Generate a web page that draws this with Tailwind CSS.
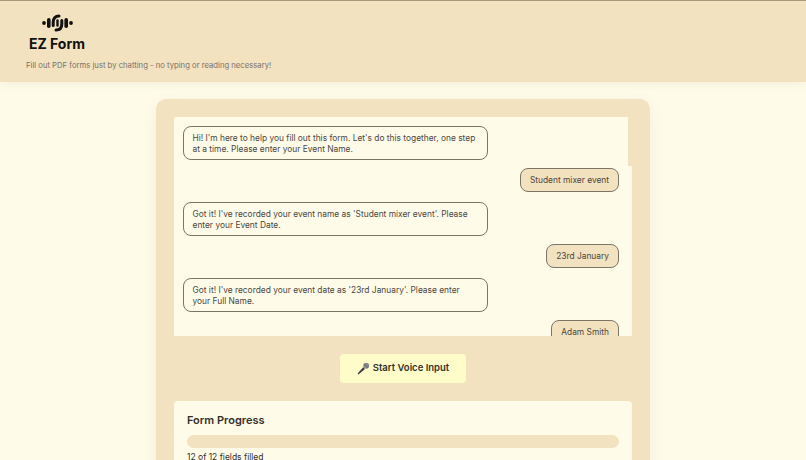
<!DOCTYPE html>
<html lang="en">
<head>
  <meta charset="UTF-8">
  <meta name="viewport" content="width=device-width, initial-scale=1.0">
  <title>EZ Form</title>
  <script src="https://cdn.jsdelivr.net/npm/@tailwindcss/browser@4"></script>
</head>
<body class="h-screen overflow-hidden bg-[#fffbe9] font-['Inter',sans-serif] text-[#4a4640]">
  <!-- Header -->
  <header class="h-[82px] bg-[#f3e2bf] border-t border-[#a8977a] shadow-[0_2px_10px_rgba(0,0,0,0.05)] pl-[26px]">
    <div class="w-[62px] flex flex-col items-center pt-[13px]">
      <svg width="31" height="18" viewBox="0 0 31 18" fill="#111">
        <circle cx="2" cy="9" r="1.9"/>
        <rect x="5" y="4" width="3.6" height="10" rx="1.8"/>
        <path d="M17 2C13.2 2 11.2 4.5 11.2 8V11.5" fill="none" stroke="#111" stroke-width="3" stroke-linecap="round"/>
        <path d="M14 16C17.8 16 19.8 13.5 19.8 10V6.5" fill="none" stroke="#111" stroke-width="3" stroke-linecap="round"/>
        <path d="M15.5 6.5V11.5" fill="none" stroke="#111" stroke-width="2.4" stroke-linecap="round"/>
        <rect x="22.4" y="4" width="3.6" height="10" rx="1.8"/>
        <circle cx="29" cy="9" r="1.9"/>
      </svg>
      <h1 class="mt-[2px] text-[14px] leading-[20px] font-bold text-[#111] whitespace-nowrap">EZ Form</h1>
    </div>
    <p class="mt-[6px] text-[7.7px] leading-[12px] text-[#78716c]">Fill out PDF forms just by chatting - no typing or reading necessary!</p>
  </header>

  <!-- Main card -->
  <main class="w-[494px] ml-[156px] mt-[17px] bg-[#f3e2bf] rounded-[10px] p-[18px] shadow-[0_4px_18px_rgba(0,0,0,0.05)]">
    <div class="relative h-[219px] overflow-hidden bg-[#fffbe9] rounded-t-[2px] pt-[9px] pl-[9px] pr-[13px] flex flex-col text-[8.4px] leading-[10.5px]">
      <div class="absolute top-0 right-0 w-[4px] h-[49px] bg-[#f3e2bf]"></div>
      <div class="w-[305px] h-[34px] shrink-0 border border-[#7a7566] rounded-[8px] px-[8.5px] py-[6px]">Hi! I'm here to help you fill out this form. Let's do this together, one step at a time. Please enter your Event Name.</div>
      <div class="self-end mt-[8px] h-[24px] shrink-0 bg-[#f3e2bf] border border-[#7a7566] rounded-[8px] px-[9px] flex items-center">Student mixer event</div>
      <div class="w-[305px] h-[34px] shrink-0 mt-[10px] border border-[#7a7566] rounded-[8px] px-[8.5px] py-[6px]">Got it! I've recorded your event name as 'Student mixer event'. Please enter your Event Date.</div>
      <div class="self-end mt-[8px] h-[24px] shrink-0 bg-[#f3e2bf] border border-[#7a7566] rounded-[8px] px-[9px] flex items-center">23rd January</div>
      <div class="w-[305px] h-[34px] shrink-0 mt-[10px] border border-[#7a7566] rounded-[8px] px-[8.5px] py-[6px]">Got it! I've recorded your event date as '23rd January'. Please enter your Full Name.</div>
      <div class="self-end mt-[8px] h-[24px] shrink-0 bg-[#f3e2bf] border border-[#7a7566] rounded-[8px] px-[9px] flex items-center">Adam Smith</div>
    </div>

    <div class="flex justify-center pt-[18px] pb-[18px]">
      <button class="h-[29px] w-[126px] bg-[#fefcc9] rounded-[4px] flex items-center justify-center gap-[3px] text-[9.5px] font-semibold text-[#33302b]">
        <svg width="13" height="13" viewBox="0 0 13 13">
          <path d="M1.4 12.4 L0.6 11.6 L6.2 5.2 L8 7 Z" fill="#3a3a3f"/>
          <circle cx="9.2" cy="3.8" r="3" fill="#8a8a8a"/>
          <path d="M7 2 L11 5.8" stroke="#555" stroke-width="0.7"/>
        </svg>
        <span>Start Voice Input</span>
      </button>
    </div>

    <section class="bg-[#fffbe9] rounded-[4px] px-[13px] pt-[12px] pb-[20px]">
      <h2 class="text-[11px] leading-[14px] font-semibold text-[#33302b]">Form Progress</h2>
      <div class="mt-[8px] h-[13px] rounded-full bg-[#f3e2bf]"></div>
      <p class="mt-[3px] text-[8.5px] leading-[12px] text-[#33302b]">12 of 12 fields filled</p>
    </section>
  </main>
</body>
</html>
